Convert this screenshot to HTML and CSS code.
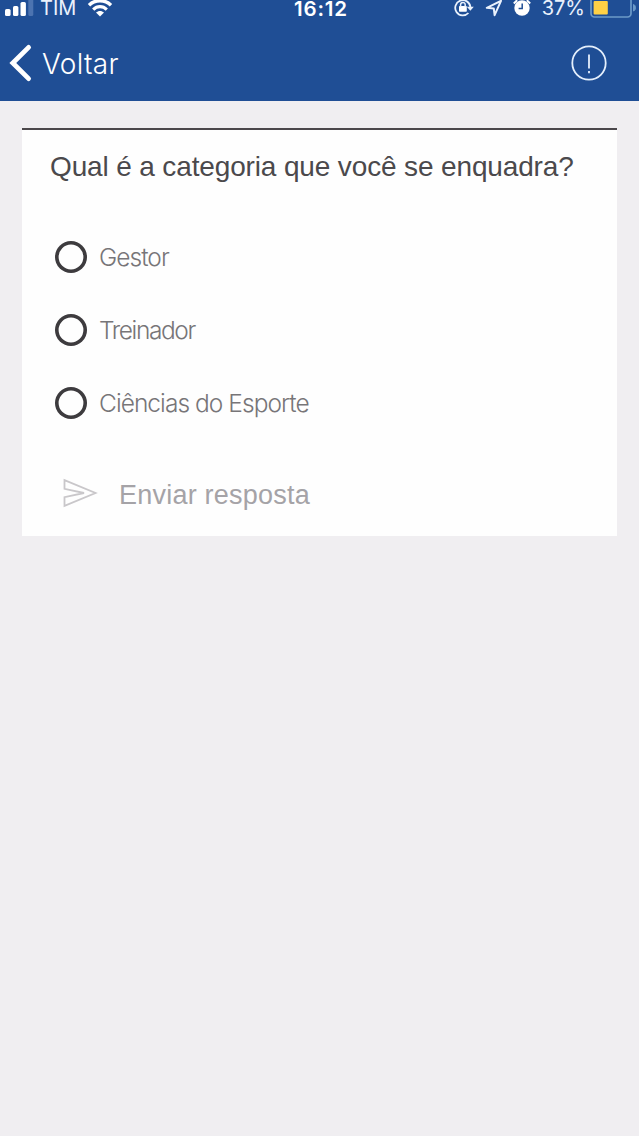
FILE: index.html
```html
<!DOCTYPE html>
<html lang="pt-BR">
<head>
<meta charset="utf-8">
<meta name="viewport" content="width=device-width, initial-scale=1">
<title>Enquete</title>
<link rel="stylesheet" href="styles.css">
</head>
<body>
<header class="header">
  <div class="status">
    <div class="status-left">
      <svg class="signal" width="29" height="18" viewBox="0 0 29 18"><g fill="#fff"><rect x="0" y="9" width="5.6" height="7" rx="1.6"/><rect x="8" y="6" width="5.4" height="10" rx="1.6"/><rect x="15.5" y="2" width="5.4" height="14" rx="1.6"/></g><rect x="23.3" y="-3" width="5" height="19" rx="1.6" fill="#4c73b0"/></svg>
      <span class="carrier">TIM</span>
      <svg class="wifi" width="26" height="18" viewBox="0 0 26 18" fill="none" stroke="#fff"><path d="M2 5.2C8-.8 18-.8 24 5.2" stroke-width="3.4"/><path d="M6.2 9.6c4-3.9 9.6-3.9 13.6 0" stroke-width="3.2"/><path d="M9 12.6c2.4-2.2 5.6-2.2 8 0l-4 3.8z" fill="#fff" stroke="none"/></svg>
    </div>
    <span class="time">16:12</span>
    <div class="status-right">
      <svg class="lock" width="20" height="18" viewBox="0 0 20 18" fill="none" stroke="#e9f1fc" stroke-width="1.8"><path d="M14.4 13A7.6 7.6 0 1 1 16.4 7"/><path d="M12.8 6.8h7L16.4 10.8z" fill="#e9f1fc" stroke="none"/><rect x="5" y="6" width="7.8" height="5.8" rx=".7" fill="#fff" stroke="none"/><path d="M6.6 7V4.7a2.3 2.3 0 0 1 4.6 0V7" stroke-width="1.5"/></svg>
      <svg class="location" width="18" height="18" viewBox="0 0 18 18" fill="none" stroke="#e9f1fc" stroke-width="2" stroke-linejoin="round"><path d="M16 .8 1.8 7.8l7 .6.8 6.8z"/></svg>
      <svg class="alarm" width="18" height="18" viewBox="0 0 18 18"><circle cx="9" cy="8" r="7.7" fill="#fff"/><path d="M.8 3.4 4.2.2M17.2 3.4 13.8.2" stroke="#fff" stroke-width="2"/><path d="M9.2 3.4v5.2H5.6" fill="none" stroke="#1f4e95" stroke-width="1.5"/></svg>
      <span class="percent">37%</span>
      <svg class="battery" width="46" height="20" viewBox="0 0 46 20"><rect x="1" y="-3" width="40" height="20" rx="3.5" fill="none" stroke="#6c9ac8" stroke-width="1.7"/><rect x="3.6" y="1" width="14.2" height="13.5" rx="1" fill="#ffd145"/><path d="M43.5 4.5c2.6.5 2.6 6 0 6.5z" fill="#6c9ac8" stroke="#6c9ac8"/></svg>
    </div>
  </div>
  <nav class="navbar">
    <a class="back">
      <svg width="23" height="38" viewBox="0 0 23 38" fill="none" stroke="#fff" stroke-width="4.8" stroke-linecap="round"><path d="M19.6 3.4 3.8 19l15.8 15.6"/></svg>
      <span class="back-label">Voltar</span>
    </a>
    <svg class="info" width="36" height="36" viewBox="0 0 36 36" fill="none" stroke="#e4effc"><circle cx="18" cy="18" r="16.7" stroke-width="1.8"/><path d="M18 9.5v14M18 26v2.2" stroke-width="1.8"/></svg>
  </nav>
</header>
<main class="card">
  <h1 class="question">Qual é a categoria que você se enquadra?</h1>
  <ul class="options">
    <li class="option"><span class="radio"></span><span class="label">Gestor</span></li>
    <li class="option"><span class="radio"></span><span class="label label-tight">Treinador</span></li>
    <li class="option"><span class="radio"></span><span class="label">Ciências do Esporte</span></li>
  </ul>
  <div class="submit">
    <svg width="36" height="30" viewBox="0 0 36 30" fill="none" stroke="#c9c7ca" stroke-width="1.8"><path d="M2.5 2.2 33.5 15 2.5 27.8v-8.6L22 15 2.5 10.8z"/></svg>
    <span class="submit-label">Enviar resposta</span>
  </div>
</main>
</body>
</html>
```
FILE: styles.css
```css
* { box-sizing: border-box; }
body {
  margin: 0;
  min-height: 1136px;
  background: #f0eef1;
  font-family: "Liberation Sans", Arial, sans-serif;
}
svg { display: block; flex: none; }
.header {
  height: 101px;
  background: #1f4e95;
  color: #fff;
  font-family: Inter, "Liberation Sans", sans-serif;
}
.status {
  display: grid;
  grid-template-columns: 1fr auto 1fr;
  height: 26px;
  line-height: 17px;
  padding: 0 3px 0 5px;
  white-space: nowrap;
}
.status-left, .status-right { display: flex; }
.status-right { justify-content: flex-end; }
.carrier { margin-left: 6px; font-size: 20px; color: #e9f1fc; }
.wifi { margin-left: 11px; }
.time { padding-left: 1px; font-size: 20.5px; font-weight: 600; letter-spacing: .8px; }
.location { margin-left: 11px; }
.alarm { margin-left: 10px; }
.percent { margin-left: 11px; font-size: 20px; color: #e9f1fc; }
.battery { margin-left: 5px; }
.lock, .location, .alarm, .percent { margin-right: 0; }
.navbar {
  display: flex;
  justify-content: space-between;
  align-items: center;
  height: 74px;
  padding: 0 32px 0 9px;
}
.back { display: flex; align-items: center; gap: 10px; }
.back-label { padding-top: 1px; font-size: 28px; font-weight: 300; letter-spacing: .3px; }
.card {
  height: 408px;
  margin: 27px 22px 0;
  padding: 21px 28px 0;
  border-top: 2px solid #4b474b;
  background: #fefefe;
}
.question {
  margin: 0;
  font-size: 28px;
  line-height: 32px;
  letter-spacing: -.14px;
  font-weight: 400;
  color: #4b494c;
  white-space: nowrap;
}
.options { list-style: none; margin: 37px 0 0 5px; padding: 0; }
.option { display: flex; align-items: center; gap: 12px; height: 73px; }
.radio {
  width: 32px;
  height: 32px;
  box-shadow: inset 0 0 0 3.6px #3d3b3e;
  border-radius: 50%;
}
.label {
  font-family: Inter, "Liberation Sans", sans-serif;
  font-size: 24.5px;
  font-weight: 300;
  letter-spacing: -.95px;
  color: #777578;
}
.label-tight { letter-spacing: -1.4px; }
.submit { display: flex; align-items: center; gap: 21px; height: 34px; margin: 37px 0 0 12px; }
.submit-label { padding-top: 4px; font-size: 27px; letter-spacing: .22px; color: #a5a3a7; }
```
